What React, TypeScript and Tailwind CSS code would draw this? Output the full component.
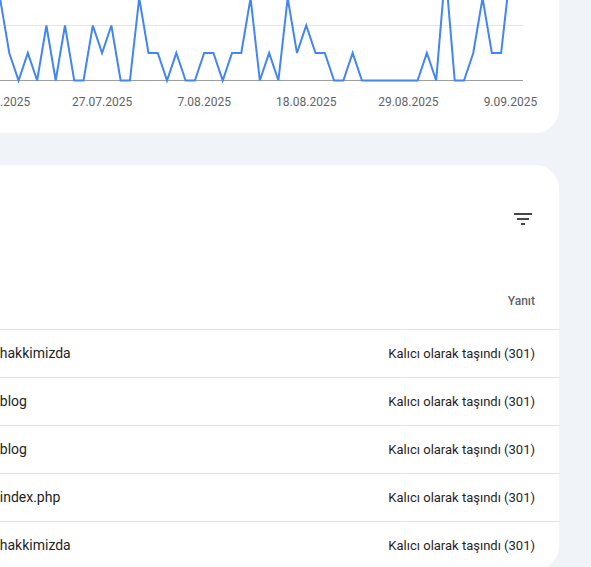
const levels = [
  3, 1, 0, 1, 0, 2, 0, 2, 0, 0, 2, 1, 2, 0, 0, 3, 1, 1, 0, 1, 0, 0, 1, 1, 0, 1, 1, 3,
  0, 1, 0, 3, 1, 2, 1, 1, 0, 0, 1, 0, 0, 0, 0, 0, 0, 0, 1, 0, 4, 0, 0, 1, 3, 1, 1, 4,
];

const dateLabels = [
  { i: 0, text: '16.07.2025' },
  { i: 11, text: '27.07.2025' },
  { i: 22, text: '7.08.2025' },
  { i: 33, text: '18.08.2025' },
  { i: 44, text: '29.08.2025' },
  { i: 55, text: '9.09.2025' },
];

const rows = ['/hakkimizda', '/blog', '/blog', '/index.php', '/hakkimizda'];

// chart svg starts at page x = -24, page y = -40
const OX = 24;
const OY = 40;
const STEP = 9.28;
const px = (i: number) => OX + i * STEP;
const py = (v: number) => OY + 80.5 - v * 27.5;

function Chart() {
  const points = levels.map((v, i) => `${px(i).toFixed(2)},${py(v).toFixed(2)}`).join(' ');
  return (
    <svg width={583} height={152} className="block">
      <line x1={0} x2={OX + 523} y1={OY + 25.5} y2={OY + 25.5} stroke="#e6e6e6" strokeWidth={1} />
      <line x1={0} x2={OX + 523} y1={OY + 80.5} y2={OY + 80.5} stroke="#9e9e9e" strokeWidth={1} />
      <polyline points={points} fill="none" stroke="#4285f4" strokeWidth={2} strokeLinejoin="miter" />
      {dateLabels.map((d) => (
        <text
          key={d.i}
          x={px(d.i)}
          y={OY + 105.5}
          textAnchor="middle"
          fontSize={12}
          fill="#5f6368"
          fontFamily="Roboto, 'Liberation Sans', sans-serif"
        >
          {d.text}
        </text>
      ))}
    </svg>
  );
}

function FilterIcon() {
  return (
    <svg width={24} height={24} viewBox="0 0 24 24" fill="#444746">
      <path d="M10 18h4v-2h-4v2zM3 6v2h18V6H3zm3 7h12v-2H6v2z" />
    </svg>
  );
}

export default function App() {
  return (
    <div className="w-[591px] h-[567px] overflow-hidden bg-[#f0f4f9] font-['Roboto','Liberation_Sans',sans-serif]">
      <div className="-ml-[24px] -mt-[60px] mr-[32px] flex flex-col gap-[32px]">
        <div className="bg-white rounded-[24px] pt-[20px] pb-[21px]">
          <Chart />
        </div>

        <div className="bg-white rounded-[24px]">
          <div className="h-[108px] flex items-center justify-end pr-[24px]">
            <FilterIcon />
          </div>
          <div className="h-[57px] flex items-center justify-end pr-[24px] border-b border-[#e0e0e0]">
            <span className="text-[12px] text-[#5f6368] font-medium">Yanıt</span>
          </div>
          {rows.map((r, i) => (
            <div
              key={i}
              className="h-[48px] flex items-center justify-between pl-[18px] pr-[24px] border-b border-[#e0e0e0] text-[#1f1f1f]"
            >
              <span className="text-[14px]">{r}</span>
              <span className="text-[13px]">Kalıcı olarak taşındı (301)</span>
            </div>
          ))}
        </div>
      </div>
    </div>
  );
}
